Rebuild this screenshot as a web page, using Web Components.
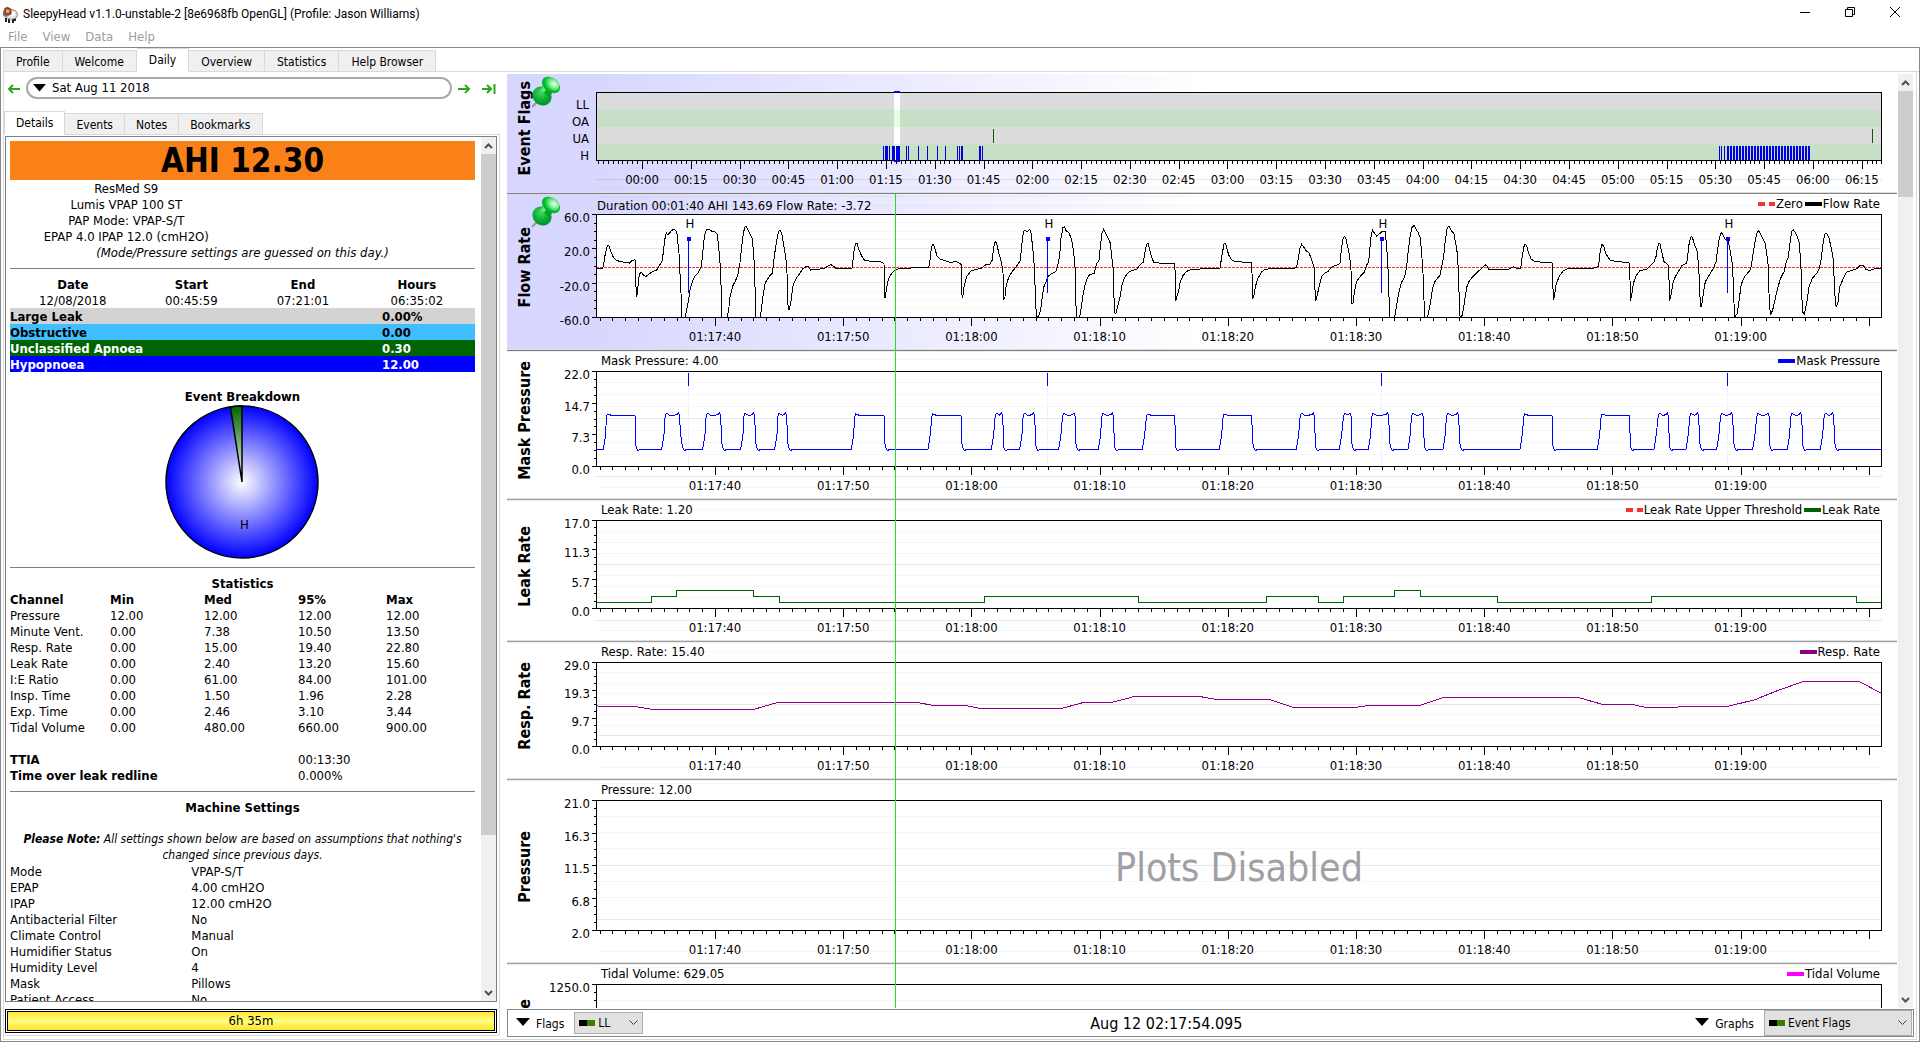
<!DOCTYPE html>
<html lang="en">
<head>
<meta charset="utf-8">
<title>SleepyHead v1.1.0-unstable-2</title>
<style>
html, body { margin: 0; height: 100%; }
body { font: 13px/16px "DejaVu Sans Condensed", "DejaVu Sans", sans-serif; color: #000; background: #fff; overflow: hidden; }
app-window { height: 100%; }
</style>
</head>
<body>
<app-window heading="SleepyHead v1.1.0-unstable-2 [8e6968fb OpenGL] (Profile: Jason Williams)">
  <tab-set labels="Profile,Welcome,Daily,Overview,Statistics,Help Browser" active="Daily">
    <daily-page></daily-page>
  </tab-set>
</app-window>

<script>
const define = (name, html, setup) => {
  const template = document.createElement('template');
  template.innerHTML = html;
  customElements.define(name, class extends HTMLElement {
    constructor() {
      super();
      this.attachShadow({ mode: 'open' }).append(template.content.cloneNode(true));
    }
    connectedCallback() {
      if (setup && !this.ready) { this.ready = true; setup(this, this.shadowRoot); }
    }
  });
};

/* ---------- window frame ---------- */
define('app-window', `
<style>
  :host { display: flex; flex-direction: column; }
  header { display: flex; align-items: center; height: 28px; padding: 0 3px 0 2px; gap: 5px; }
  header h1 { flex: 1; margin: 0; font: 12px/28px Roboto, "Open Sans", sans-serif; }
  .controls { display: flex; }
  .controls button { width: 45px; height: 28px; border: 0; padding: 0 0 4px; background: none; display: grid; place-items: center; }
  nav { display: flex; gap: 15px; height: 18px; padding: 1px 0 0 8px; align-items: flex-start; }
  nav button { border: 0; padding: 0; background: none; font: inherit; color: #9d9d9d; }
  main { flex: 1; min-height: 0; display: flex; border: 1px solid #828790; }
  ::slotted(*) { flex: 1; min-width: 0; }
</style>
<header>
  <svg width="16" height="17" viewBox="0 0 16 17" aria-hidden="true">
    <path d="M4 12v4M7 13v4M11 13v4M13 12v3" stroke="#222" stroke-width="2"/>
    <path d="M6 4q3-2 5 0 3 0 4 3 1 3-1 5-4 2-7 1-4-1-4-5z" fill="#e9e4e2" stroke="#8a8684" stroke-width="1"/>
    <path d="M10 6q3 0 3 3-2 2-4 1z" fill="#fff"/>
    <path d="M1 6q-1 4 2 6l4-2-1-6-4 0z" fill="#75706d"/>
    <path d="M2 3Q5-1 9 3q1 3 0 6L3 8z" fill="#8d3a20"/>
    <path d="M4 3l4 1-1 3-3 0z" fill="#e9a55c"/>
    <path d="M1 10q3 3 7 0" stroke="#eee" fill="none"/>
  </svg>
  <h1></h1>
  <div class="controls">
    <button aria-label="Minimize"><svg width="10" height="10"><path d="M0 5.500h10" stroke="#000"/></svg></button>
    <button aria-label="Restore"><svg width="10" height="10" fill="none" stroke="#000"><path d="M.5 2.500h7v7h-7zM2.500 2.500v-2h7v7h-2"/></svg></button>
    <button aria-label="Close"><svg width="10" height="10" stroke="#000"><path d="M0 0l10 10M10 0L0 10"/></svg></button>
  </div>
</header>
<nav><button>File</button><button>View</button><button>Data</button><button>Help</button></nav>
<main><slot></slot></main>`,
(host, root) => { root.querySelector('h1').textContent = host.getAttribute('heading'); });

/* ---------- tabs ---------- */
define('tab-set', `
<style>
  :host { display: flex; flex-direction: column; min-height: 0; }
  .bar { display: flex; align-items: flex-end; height: 24px; padding-left: 2px; }
  .bar::after { content: ""; flex: 1; border-bottom: 1px solid #d9d9d9; }
  button { font: inherit; font-size: 12px; height: 22px; padding: 2px 12px 0; background: #f0f0f0; border: 1px solid #d9d9d9; border-left-width: 0; color: #000; }
  button:first-child { border-left-width: 1px; }
  button[aria-selected=true] { background: #fff; height: 24px; border-bottom-color: #fff; padding-bottom: 2px; }
  .frame { flex: 1; min-height: 0; display: flex; margin: 0 2px 1px; border: 1px solid #d9d9d9; border-top: 0; }
  ::slotted(*) { flex: 1; min-width: 0; }
  :host([inner]) .bar { padding-left: 0; }
  :host([inner]) button { padding-inline: 11px; }
  :host([inner]) .frame { margin: 0; border-left: 0; }
</style>
<div class="bar" role="tablist"></div>
<div class="frame"><slot></slot></div>`,
(host, root) => {
  const bar = root.querySelector('.bar');
  for (const label of host.getAttribute('labels').split(',')) {
    const b = document.createElement('button');
    b.role = 'tab';
    b.textContent = label;
    b.setAttribute('aria-selected', label === host.getAttribute('active'));
    bar.append(b);
  }
});

/* ---------- scroll bar ---------- */
define('scroll-bar', `
<style>
  :host { display: flex; flex-direction: column; width: 15px; background: #f0f0f0; }
  button { height: 17px; border: 0; padding: 0; background: none; display: grid; place-items: center; }
  .track { flex: 1; }
  .thumb { background: #cdcdcd; height: var(--thumb, 50%); }
</style>
<button aria-label="Up"><svg width="9" height="6" fill="none" stroke="#505050" stroke-width="2"><path d="M1 5l3.500-3.500L8 5"/></svg></button>
<div class="track"><div class="thumb"></div></div>
<button aria-label="Down"><svg width="9" height="6" fill="none" stroke="#505050" stroke-width="2"><path d="M1 1l3.500 3.500L8 1"/></svg></button>`);

/* ---------- page ---------- */
define('daily-page', `
<style>
  :host { display: flex; gap: 7px; min-height: 0; }
  .left { flex: 0 0 496px; display: flex; flex-direction: column; padding-bottom: 3px; box-sizing: border-box; }
  .left tab-set { flex: 1; min-height: 0; }
  graph-area { flex: 1; min-width: 0; }
</style>
<div class="left">
  <date-bar></date-bar>
  <tab-set inner labels="Details,Events,Notes,Bookmarks" active="Details"><details-panel></details-panel></tab-set>
</div>
<graph-area></graph-area>`);

define('date-bar', `
<style>
  :host { display: flex; align-items: flex-start; gap: 5px; padding: 5px 3px 11px 3px; height: 23px; }
  button { border: 0; background: none; padding: 0; font: inherit; font-size: 13px; color: #000; }
  .arrow { width: 14px; height: 23px; display: grid; place-items: center; }
  .arrow.end { margin-left: 5px; width: 16px; }
  .date { flex: 1; height: 22px; border: 2px solid #a9a9a9; border-radius: 11px; display: flex; align-items: center; gap: 6px; padding: 0 5px; }
  .arrow path { fill: none; stroke: #2fa51f; stroke-width: 2; }
</style>
<button class="arrow" aria-label="Previous day"><svg width="14" height="12"><path d="M13 6H2M6 2L2 6l4 4"/></svg></button>
<button class="date"><svg width="13" height="8"><path d="M0 0h13L6.500 7.500z"/></svg>Sat Aug 11 2018</button>
<button class="arrow" aria-label="Next day"><svg width="14" height="12"><path d="M1 6h11M8 2l4 4-4 4"/></svg></button>
<button class="arrow end" aria-label="Last day"><svg width="14" height="12"><path d="M0 6h8M5 2l4 4-4 4M12.500 1v10"/></svg></button>`);

define('details-panel', `
<style>
  :host { display: flex; flex-direction: column; padding: 1px 2px 2px 1px; min-height: 0; font-size: 13px; }
  .view { flex: 1; min-height: 0; display: flex; border: 1px solid #808080; }
  .doc { flex: 1; min-width: 0; overflow: hidden; padding: 4px 6px 0 4px; }
  .ahi { background: #fa8117; height: 39px; line-height: 39px; font-size: 33px; font-weight: bold; text-align: center; margin: 0; }
  .machine { width: 50%; text-align: center; padding-top: 1px; }
  p { margin: 0; text-align: center; }
  hr { border: 0; border-top: 1px solid #808080; margin: 8px 0 7px; }
  p + hr { margin-top: 7px; }
  table { width: 100%; border-collapse: collapse; table-layout: fixed; }
  th, td { padding: 2px 0 0; height: 14px; line-height: 14px; text-align: left; }
  .session th, .session td { text-align: center; }
  h3 { margin: 0; font-size: 13px; line-height: 14px; padding-top: 2px; text-align: center; }
  .pie { display: block; margin: 0 auto; }
  .note { font-size: 12px; }
  .gap { height: 16px; }
  .usage { font: inherit; font-size: 13px; height: 24px; margin: 7px 0 0; padding: 0; color: #000; border: 1px solid #000; outline: 1px solid #000; outline-offset: -3px;
    background: linear-gradient(#ffe022, #ffff80 50%, #ffdc18) padding-box; box-shadow: inset 0 0 0 1px #fff; }
</style>
<div class="view">
  <div class="doc">
    <h2 class="ahi">AHI 12.30</h2>
    <div class="machine">ResMed S9<br>Lumis VPAP 100 ST<br>PAP Mode: VPAP-S/T<br>EPAP 4.0 IPAP 12.0 (cmH2O)</div>
    <p><i>(Mode/Pressure settings are guessed on this day.)</i></p>
    <hr>
    <table class="session">
      <colgroup><col style="width:27%"><col style="width:24%"><col style="width:24%"><col style="width:25%"></colgroup>
      <tr><th>Date</th><th>Start</th><th>End</th><th>Hours</th></tr>
      <tr><td>12/08/2018</td><td>00:45:59</td><td>07:21:01</td><td>06:35:02</td></tr>
    </table>
    <table>
      <colgroup><col style="width:80%"><col></colgroup>
      <tr style="background:#d3d3d3"><th>Large Leak</th><th>0.00%</th></tr>
      <tr style="background:#40bfff"><th>Obstructive</th><th>0.00</th></tr>
      <tr style="background:#006400;color:#fff"><th>Unclassified Apnoea</th><th>0.30</th></tr>
      <tr style="background:#00f;color:#fff"><th>Hypopnoea</th><th>12.00</th></tr>
    </table>
    <div class="gap"></div>
    <h3>Event Breakdown</h3>
    <svg class="pie" width="156" height="155" viewBox="1 0 156 155">
      <defs>
        <radialGradient id="b" gradientUnits="userSpaceOnUse" cx="78" cy="78" r="76"><stop offset="0" stop-color="#fff"/><stop offset="1" stop-color="#00f"/></radialGradient>
        <radialGradient id="g" gradientUnits="userSpaceOnUse" cx="78" cy="78" r="76"><stop offset="0" stop-color="#fff"/><stop offset="1" stop-color="#006400"/></radialGradient>
      </defs>
      <circle cx="78" cy="78" r="76" fill="url(#b)" stroke="#000" stroke-width="1.500"/>
      <path d="M78 78L66.400 2.900A76 76 0 0 1 78 2z" fill="url(#g)" stroke="#000" stroke-width="1.500"/>
      <text x="76" y="125">H</text>
    </svg>
    <hr>
    <h3>Statistics</h3>
    <table class="stats">
      <colgroup><col style="width:100px"><col style="width:94px"><col style="width:94px"><col style="width:88px"><col></colgroup>
      <tbody></tbody>
      <tr><td colspan="5"></td></tr>
      <tr><th colspan="3">TTIA</th><td colspan="2">00:13:30</td></tr>
      <tr><th colspan="3">Time over leak redline</th><td colspan="2">0.000%</td></tr>
    </table>
    <hr>
    <h3>Machine Settings</h3>
    <div class="gap"></div>
    <p class="note"><i><b>Please Note:</b> All settings shown below are based on assumptions that nothing's changed since previous days.</i></p>
    <table class="settings"><colgroup><col style="width:39%"><col></colgroup><tbody></tbody></table>
  </div>
  <scroll-bar style="--thumb:82%"></scroll-bar>
</div>
<button class="usage">6h 35m</button>`,
(host, root) => {
  const fill = (body, rows, head) => rows.forEach((row, i) => {
    const tr = body.insertRow();
    for (const text of row) {
      const cell = document.createElement(head && i === 0 ? 'th' : 'td');
      cell.textContent = text;
      tr.append(cell);
    }
  });
  fill(root.querySelector('.stats tbody'), [
    ['Channel', 'Min', 'Med', '95%', 'Max'],
    ['Pressure', '12.00', '12.00', '12.00', '12.00'],
    ['Minute Vent.', '0.00', '7.38', '10.50', '13.50'],
    ['Resp. Rate', '0.00', '15.00', '19.40', '22.80'],
    ['Leak Rate', '0.00', '2.40', '13.20', '15.60'],
    ['I:E Ratio', '0.00', '61.00', '84.00', '101.00'],
    ['Insp. Time', '0.00', '1.50', '1.96', '2.28'],
    ['Exp. Time', '0.00', '2.46', '3.10', '3.44'],
    ['Tidal Volume', '0.00', '480.00', '660.00', '900.00']], true);
  fill(root.querySelector('.settings tbody'), [
    ['Mode', 'VPAP-S/T'], ['EPAP', '4.00 cmH2O'], ['IPAP', '12.00 cmH2O'],
    ['Antibacterial Filter', 'No'], ['Climate Control', 'Manual'], ['Humidifier Status', 'On'],
    ['Humidity Level', '4'], ['Mask', 'Pillows'], ['Patient Access', 'No']]);
});

/* ---------- graph column ---------- */
define('graph-area', `
<style>
  :host { display: flex; flex-direction: column; padding: 2px 2px 2px 0; min-height: 0; }
  .view { flex: 1; min-height: 0; display: flex; gap: 1px; padding-right: 1px; }
  .stack { flex: 1; min-width: 0; overflow: hidden; }
</style>
<div class="view">
  <div class="stack">
    <day-graph key="flags"></day-graph>
    <day-graph key="flow"></day-graph>
    <day-graph key="mask"></day-graph>
    <day-graph key="leak"></day-graph>
    <day-graph key="resp"></day-graph>
    <day-graph key="pressure"></day-graph>
    <day-graph key="tidal"></day-graph>
  </div>
  <scroll-bar style="--thumb:106px"></scroll-bar>
</div>
<graph-toolbar></graph-toolbar>`);

define('graph-toolbar', `
<style>
  :host { display: flex; align-items: center; justify-content: space-between; height: 26px; border: 1px solid #828790; margin-top: 1px; }
  .group { display: flex; align-items: center; gap: 6px; padding-left: 8px; }
  .group.end { padding: 0 1px 0 0; }
  .group > svg { margin-bottom: 3px; }
  time { font-size: 16px; padding: 2px 6px 0 0; }
</style>
<div class="group"><svg width="14" height="8"><path d="M0 0h14L7 8z"/></svg><pick-list value="LL" label="Flags"></pick-list></div>
<time>Aug 12 02:17:54.095</time>
<div class="group end"><svg width="14" height="8"><path d="M0 0h14L7 8z"/></svg><pick-list wide value="Event Flags" label="Graphs"></pick-list></div>`);

define('pick-list', `
<style>
  :host { display: flex; align-items: center; gap: 10px; font-size: 12px; }
  label { padding-top: 2px; }
  .box { position: relative; }
  select { appearance: none; display: block; font: inherit; color: #000; width: 69px; height: 22px; padding: 0 0 0 23px; border: 1px solid #adadad; border-radius: 0; background: #e1e1e1; }
  :host([wide]) select { width: 148px; height: 26px; }
  svg { position: absolute; pointer-events: none; top: 50%; margin-top: -3px; }
  .swatch { left: 5px; }
  .chevron { right: 5px; }
</style>
<label for="s"></label>
<div class="box">
  <select id="s"><option></option></select>
  <svg class="swatch" width="16" height="6"><path d="M0 0h8v6H0z"/><path d="M8 0h8v6H8z" fill="#3c7d00"/></svg>
  <svg class="chevron" width="9" height="6" fill="none" stroke="#444"><path d="M.5.5l4 4 4-4"/></svg>
</div>`,
(host, root) => {
  root.querySelector('label').textContent = host.getAttribute('label');
  root.querySelector('option').textContent = host.getAttribute('value');
});

/* ---------- graph data (drawing units: three to a pixel at full width) ---------- */
const SPAN = 3858;
const FLOW = [
  [-288, '290,624 308,624 311,614 316,580 322,558 326,556 330,568 338,588 347,600 358,604 375,607 388,609 395,602 404,599 406,602 408,680 410,712 414,680 418,642 424,637 430,645 437,650 446,643 455,636 470,630 480,614 487,602 490,575 496,528 499,519 503,524 508,520 515,511 523,508 528,512 531,522 537,580 541,660 543,700 545,771 556,771 560,750 566,720 570,690 576,668 584,650 596,636 604,620 608,580 613,530 618,512 622,508 630,510 636,514 644,514 652,524 656,560 661,620 664,700 666,771 681,771 686,750 690,710 698,678 706,664 714,642 720,608 724,570 730,520 735,500 739,499 744,510 750,522 756,534 759,560 762,600 765,680 768,771 781,771 785,740 790,700 796,668 804,656 812,644 818,638 820,610 826,568 832,530 837,512 842,512 846,525 852,560 858,600 861,640 863,730 867,750 872,730 876,700 880,672 888,656 896,645 908,627 918,620 924,620 932,630 945,628 960,627 975,624 985,618 993,614 1000,618 1008,626 1018,627 1030,624 1042,626 1056,624 1059,600 1063,565 1067,550 1071,550 1075,566 1085,588 1093,600 1110,604 1130,604 1148,607 1152,612 1153,660 1155,715 1159,690 1163,665 1170,648 1180,634 1188,630 1200,624 1220,626 1240,623 1286,623 1290,600 1294,565 1298,553 1301,554 1305,568 1312,590 1322,598 1340,604 1352,608 1366,604 1378,609'],
  [1092, '4,615 5,700 8,715 12,680 20,650 33,633 50,628 65,624 78,614 90,612 97,600 100,570 104,548 108,545 112,560 118,585 124,605 129,640 131,720 135,710 138,680 145,655 155,637 170,618 181,602 184,570 188,530 192,512 203,514 209,508 213,520 218,560 223,620 226,700 229,771 236,768 242,750 247,710 251,682 258,665 266,648 278,639 288,634 295,610 299,585 303,535 309,502 313,500 318,512 327,518 335,540 341,575 345,620 347,700 349,771 359,771 364,740 370,700 376,670 386,646 403,640 410,610 417,602 421,560 426,520 431,508 436,518 444,534 451,550 455,590 459,620 461,690 464,758 468,760 474,735 480,710 486,675 494,652 506,636 516,632 530,628 540,615 550,606 554,580 560,552 564,550 568,565 574,590 582,608 590,606 600,611 615,609 628,611 643,610 646,640 647,723 651,708 656,695 660,668 668,648 680,634 695,628 710,630 725,625 745,627 765,624 780,624 783,605 787,580 792,552 796,550 800,562 806,585 815,600 825,604 845,606 860,608 873,607 876,640 878,718 882,705 886,680 894,655 905,636 915,628 935,626 955,627 975,625 995,627 1010,622 1014,600 1020,565 1025,553 1030,560 1040,574 1047,578 1055,600 1062,620 1065,690 1067,722 1072,705 1078,675 1085,650 1094,640 1105,634 1113,622 1128,616 1140,610 1143,580 1148,540 1153,530 1157,532 1163,560 1169,590 1173,630 1175,730 1179,730 1184,690 1190,665 1200,650 1212,638 1220,615 1226,605 1230,560 1234,520 1238,511 1244,520 1250,528 1258,522 1266,515 1275,513 1279,550 1283,600 1286,680 1289,771 1304,771 1309,740 1316,700 1324,668 1334,650 1340,620 1344,580 1350,530 1356,502 1362,496 1367,506 1375,518 1381,535 1385,580 1389,640 1392,720 1393,771 1403,771'],
  [2502, '0,735 8,685 16,662 30,646 35,620 41,590 46,540 52,502 58,499 63,510 72,522 77,550 82,580 86,650 88,740 90,768 95,771 100,750 105,715 110,682 118,662 130,648 145,634 160,620 168,614 178,630 195,627 215,628 235,628 250,620 262,626 272,626 276,595 281,562 285,553 290,556 296,580 304,598 315,605 330,606 350,608 366,608 368,650 370,720 374,705 378,675 388,648 400,632 412,626 435,626 460,626 480,624 492,624 504,620 508,600 511,570 516,553 521,558 528,582 540,600 555,604 575,606 597,608 600,660 601,722 606,700 610,670 618,648 630,632 650,628 662,616 672,606 678,590 682,565 687,550 690,552 696,580 702,605 714,614 717,660 719,722 724,700 728,672 736,650 748,630 756,616 770,610 774,580 778,545 783,530 787,532 793,552 801,572 806,620 809,680 811,738 815,738 820,700 826,665 838,645 850,625 858,605 862,575 868,535 874,517 880,526 887,540 895,545 900,570 906,605 909,650 912,730 914,771 922,760 928,715 934,672 944,650 962,628 968,590 975,545 982,515 987,512 995,530 1005,548 1010,580 1015,620 1017,700 1021,765 1028,750 1036,715 1044,680 1052,655 1062,635 1068,610 1075,590 1080,550 1085,515 1090,509 1100,524 1107,545 1112,600 1115,680 1117,755 1123,762 1130,730 1137,680 1147,655 1160,640 1168,625 1173,600 1180,545 1184,522 1190,520 1197,535 1203,560 1210,600 1213,670 1216,725 1219,742 1224,725 1229,680 1238,660 1250,636 1265,632 1280,626 1290,617 1300,617 1308,628 1318,632 1335,626 1356,626']
];
const flowPath = 'M' + FLOW.map(([dx, pts]) => pts.split(' ').map(p => {
  const [x, y] = p.split(',').map(Number);
  return `${x + dx} ${y - 462}`;
}).join('L')).join('L');

const PULSES = [
  [-288, [[310,322,404,409],[485,498,538,548],[608,621,661,668],[722,734,763,770],[824,836,859,866],[1054,1067,1151,1157],[1284,1298,1382,1388]]],
  [1092, [[94,108,127,132],[179,192,223,229],[296,310,344,350],[415,428,459,465],[547,562,643,648],[778,792,874,881],[1009,1023,1062,1068],[1138,1153,1172,1178],[1225,1238,1285,1292],[1344,1357,1388,1395]]],
  [2502, [[39,52,85,92],[270,284,365,370],[502,516,597,602],[672,687,714,719],[768,782,805,812],[860,874,907,914],[968,983,1016,1021],[1072,1085,1114,1120],[1171,1185,1210,1217]]]
];
const maskPath = 'M0 235' + PULSES.map(([dx, list]) => list.map(([a, b, c, d]) => {
  const wide = c - b > 70;
  const top = wide
    ? `L${b+dx} 129L${b+dx+7} 130L${b+dx+10} 133L${c+dx} 133`
    : `L${b+dx} 128L${b+dx+5} 129L${b+dx+10} 132L${(b+c)/2+dx} 133L${c+dx-7} 131L${c+dx-2} 126`;
  return `L${a+dx} 235L${a+dx+7} 190L${b+dx-3} 140${top}L${c+dx+1} 135L${c+dx+3} 185L${d+dx-2} 218L${d+dx} 230L${d+dx+4} 238L${d+dx+9} 237L${d+dx+11} 235`;
}).join('')).join('') + 'L3858 235';

const leakPath = 'M0 246' + [[166,228],[241,210],[472,228],[550,246],[1165,228],[1628,246],[2011,228],[2168,246],[2242,228],[2395,210],[2474,228],[2704,246],[3166,228],[3781,246]]
  .map(([x, y]) => `H${x}V${y}`).join('') + 'H3858';
const respPath = 'M' + [[596,130],[599,133],[634,133],[652,142],[754,142],[778,121],[916,121],[933,130],[964,130],[980,139],[1062,139],[1084,121],[1112,121],[1135,103],[1199,103],[1206,107],[1216,112],[1269,112],[1293,136],[1356,136],[1370,130],[1420,130],[1444,106],[1578,106],[1602,127],[1632,127],[1645,136],[1677,136],[1680,133],[1728,133],[1755,113],[1779,84],[1804,58],[1859,58],[1882,95]]
  .map(([x, y]) => `${(x - 596) * 3} ${y}`).join('L');

const EVENTS = [93, 452, 786, 1132];
const RED = '#ff3030';
const GRAPHS = {
  flags: { name: 'Event Flags', h: 68, head: 18, pinned: true, flags: true, light: [96], dark: [87] },
  flow: { name: 'Flow Rate', title: 'Duration 00:01:40 AHI 143.69 Flow Rate: -3.72', flush: true, h: 103, pinned: true,
    y: ['60.0', '20.0', '-20.0', '-60.0'], path: flowPath, colour: '#000', legend: [['Zero', RED, 1], ['Flow Rate', '#000']],
    light: [-18, -9, 8, 17, 25, 43, 60, 77, 85, 94], dark: [34, 68] },
  mask: { name: 'Mask Pressure', title: 'Mask Pressure: 4.00', h: 95, y: ['22.0', '14.7', '7.3', '0.0'], path: maskPath, colour: '#00f',
    legend: [['Mask Pressure', '#00f']], light: [-12, 11, 23, 35, 59, 71, 83, 116], dark: [47, 105] },
  leak: { name: 'Leak Rate', title: 'Leak Rate: 1.20', h: 88, y: ['17.0', '11.3', '5.7', '0.0'], path: leakPath, colour: '#006400',
    legend: [['Leak Rate Upper Threshold', RED, 1], ['Leak Rate', '#006400']], light: [-11, 11, 22, 33, 55, 66, 77, 110], dark: [44, 100] },
  resp: { name: 'Resp. Rate', title: 'Resp. Rate: 15.40', h: 84, y: ['29.0', '19.3', '9.7', '0.0'], path: respPath, colour: '#8b008b',
    legend: [['Resp. Rate', '#8b008b']], light: [-11, 10, 21, 31, 52, 63, 105], dark: [42, 73] },
  pressure: { name: 'Pressure', title: 'Pressure: 12.00', h: 130, y: ['21.0', '16.3', '11.5', '6.8', '2.0'], note: 'Plots Disabled',
    light: [-17, 16, 32, 48, 81, 97, 113, 151], dark: [65, 119] },
  tidal: { name: 'Tidal Volume', title: 'Tidal Volume: 629.05', h: 130, y: ['1250.0', '', '', '', ''], noTimes: true,
    legend: [['Tidal Volume', '#f0f']], light: [-17, 16], dark: [] }
};

const pct = px => (px / 12.86).toFixed(3) + '%';
const line = (x1, y1, x2, y2, stroke, extra = '') => `<line x1="${x1}" y1="${y1}" x2="${x2}" y2="${y2}" stroke="${stroke}" ${extra}/>`;
const vtick = (px, y1, y2, stroke, extra) => line(pct(px), y1, pct(px), y2, stroke, extra);

function drawPlot(g) {
  const h = g.h;
  let s = '';
  if (!g.flags) s += `<rect x="0" y="0" width="100%" height="${h}" fill="#fff"/>`;
  for (const y of g.light) s += line(0, y + .5, '100%', y + .5, '#000', 'opacity=".03"');
  for (const y of g.dark) s += line(0, y + .5, '100%', y + .5, '#000', 'opacity=".09"');

  if (g.flags) {
    ['LL', 'OA', 'UA', 'H'].forEach((label, i) => {
      s += `<rect x="0" y="${i * 17 + 1}" width="100%" height="17" fill="${i % 2 ? '#c6dfc6' : '#dcdcdc'}"/>`;
      s += `<rect x="${pct(298)}" y="${i * 17 + 1}" width="${pct(6)}" height="17" fill="${i % 2 ? '#e2ffe2' : '#fff'}"/>`;
      s += `<text x="-7" y="${i * 17 + 17}" text-anchor="end">${label}</text>`;
    });
    const thin = [288, 290, 294, 297, 311, 313, 323, 332, 342, 350, 362, 364, 387, 1124, 1126, 1129];
    const thick = [291, 298, 301, 303, 366, 384];
    for (let x = 1132; x < 1214; x += 3) thick.push(x);
    for (const x of thin) s += vtick(x - .5, 54, h, '#0000e0');
    for (const x of thick) s += vtick(x, 54, h, '#0000e0', 'stroke-width="2"');
    for (const x of [397.5, 1276.5]) s += vtick(x, 37, 51, '#006400');
  }

  const ys = g.y || [];
  const n = ys.length - 1;
  ys.forEach((label, i) => {
    const y = Math.round(i * h / n);
    s += line(-4, y + .5, 0, y + .5, '#000');
    if (label) s += `<text x="-6" y="${y + 8}" text-anchor="end">${label}</text>`;
    if (i < n) for (let k = 1; k < 4; k++) {
      const m = Math.round((i + k / 4) * h / n) + .5;
      s += line(-2, m, 0, m, '#000');
    }
  });

  if (g.path) {
    if (g.name === 'Flow Rate') s += line(0, 53.5, '100%', 53.5, RED, 'stroke-dasharray="3 1"');
    if (g.name === 'Mask Pressure') for (const x of EVENTS) s += vtick(x - .5, 0, h, '#f0f0ff') + vtick(x - .5, 2, 15, '#00f');
    s += `<svg x="0" y="0" width="100%" height="${h}" viewBox="0 0 ${SPAN} ${h * 3}" preserveAspectRatio="none"><path d="${g.path}" fill="none" stroke="${g.colour}" vector-effect="non-scaling-stroke"/></svg>`;
    if (g.name === 'Flow Rate') for (const x of EVENTS) {
      s += vtick(x - .5, 25, 79, '#00f') + line(pct(x), 23, pct(x), 27, '#00f', 'stroke-width="4"');
      s += `<text x="${pct(x + 1)}" y="14" text-anchor="middle">H</text>`;
    }
  }

  s += `<rect x=".5" y=".5" width="100%" height="${h}" fill="none" stroke="#000" class="edge"/>`;
  if (g.flags) {
    s += line(pct(298), 0, pct(304), 0, '#00f', 'stroke-width="2"') + line(pct(298), h + 1, pct(304), h + 1, '#00f', 'stroke-width="2"');
    for (let i = -9; i <= 254; i++) s += vtick(46.5 + i * 4.879, h, h + (i % 10 ? 4 : 9), '#000');
    for (let i = 0; i <= 25; i++) {
      const t = String(Math.floor(i / 4)).padStart(2, '0') + ':' + String(i % 4 * 15).padStart(2, '0');
      s += `<text x="${pct(46 + i * 48.79)}" y="${h + 24}" text-anchor="middle">${t}</text>`;
    }
  } else {
    for (let i = -9; i <= 90; i++) s += vtick(119.5 + i * 12.82, h, h + (i % 10 ? 4 : 9), '#000');
    if (!g.noTimes) for (let i = 0; i < 9; i++) {
      const sec = 40 + i * 10;
      const t = '01:' + (17 + Math.floor(sec / 60)) + ':' + String(sec % 60).padStart(2, '0');
      s += `<text x="${pct(119 + i * 128.2)}" y="${h + 24}" text-anchor="middle">${t}</text>`;
    }
    s += vtick(299.5, -20, h + 34, '#2d2');
  }
  if (g.note) s += `<text class="note" x="50%" y="${h / 2 + 16}" text-anchor="middle">${g.note}</text>`;
  return s;
}

define('day-graph', `
<style>
  :host { display: grid; grid-template-columns: 36px 53px minmax(0, 1fr) 15px; grid-template-rows: auto auto; position: relative;
    border-bottom: 1px solid #a0a0a0; box-shadow: inset 0 -1px #dedede, 0 1px #ececec; }
  :host([pinned]) { background: linear-gradient(90deg, #d6d6ff 0, #d8d8ff 7%, #f0f0ff 34%, #fff 50%); border-color: #808080; }
  .name { grid-row: 2; grid-column: 1; display: flex; align-items: center; justify-content: center; margin-top: 2px; }
  .name span { writing-mode: vertical-rl; rotate: 180deg; font-size: 16px; font-weight: bold; line-height: 20px; white-space: nowrap; }
  .head { grid-row: 1; grid-column: 3; display: flex; justify-content: space-between; align-items: center; padding: 0 2px 0 5px; box-sizing: border-box; }
  .head.flush { padding-left: 1px; }
  .head.flush > span { padding-top: 3px; }
  .legend { display: flex; gap: 2px; margin-left: auto; padding-bottom: 1px; }
  .legend span { display: flex; align-items: center; gap: 1px; }
  .legend i { width: 17px; height: 4px; background: var(--c); }
  .legend i.dash { background: linear-gradient(90deg, var(--c) 7px, #0000 7px, #0000 11px, var(--c) 11px); }
  .plot { grid-row: 2; grid-column: 3; display: block; width: 100%; overflow: visible; margin-bottom: 33px; }
  .plot line, .plot path, .plot rect { shape-rendering: crispEdges; }
  .plot .edge { width: calc(100% - 1px); }
  text { font-size: 13px; }
  .note { font-size: 39px; fill: #a0a0a4; }
</style>
<div class="name"><span></span></div>
<div class="head"><span></span><div class="legend"></div></div>
<svg class="plot"></svg>`,
(host, root) => {
  const g = GRAPHS[host.getAttribute('key')];
  const name = root.querySelector('.name');
  name.style.height = g.h + 'px';
  name.firstChild.textContent = g.name;
  const head = root.querySelector('.head');
  head.style.height = (g.head || 20) + 'px';
  head.classList.toggle('flush', !!g.flush);
  head.firstChild.textContent = g.title || '';
  root.querySelector('.legend').innerHTML = (g.legend || []).map(([t, c, dash]) => `<span style="--c:${c}"><i class="${dash ? 'dash' : ''}"></i>${t}</span>`).join('');
  const plot = root.querySelector('.plot');
  plot.setAttribute('height', g.h);
  plot.innerHTML = drawPlot(g);
  if (g.pinned) {
    host.setAttribute('pinned', '');
    root.append(document.createElement('push-pin'));
  }
});

define('push-pin', `
<style>:host { display: block; position: absolute; left: 25px; top: 2px; } svg { display: block; }</style>
<svg width="30" height="32" viewBox="0 0 30 32" aria-hidden="true">
  <defs>
    <radialGradient id="h" cx=".6" cy=".4" r=".6"><stop offset="0" stop-color="#f0fff0"/><stop offset=".45" stop-color="#8fee9c"/><stop offset="1" stop-color="#08cc34"/></radialGradient>
    <radialGradient id="k" cx=".35" cy=".4" r=".8"><stop offset="0" stop-color="#45d862"/><stop offset=".5" stop-color="#0aae30"/><stop offset="1" stop-color="#008424"/></radialGradient>
  </defs>
  <path d="M6 25L0 31" stroke="#999" stroke-width="2"/>
  <ellipse cx="10" cy="20" rx="10" ry="9" transform="rotate(40 10 20)" fill="url(#k)"/>
  <path d="M8 13L12 8l9 8-4 5z" fill="#0b9c2a"/>
  <path d="M8 14l4-5 3 3-3 5z" fill="#5fe47a"/>
  <ellipse cx="19" cy="9" rx="10" ry="7" transform="rotate(38 19 9)" fill="#00b82a"/>
  <ellipse cx="20" cy="8" rx="8" ry="6" transform="rotate(38 20 8)" fill="url(#h)"/>
</svg>`);
</script>
</body>
</html>
